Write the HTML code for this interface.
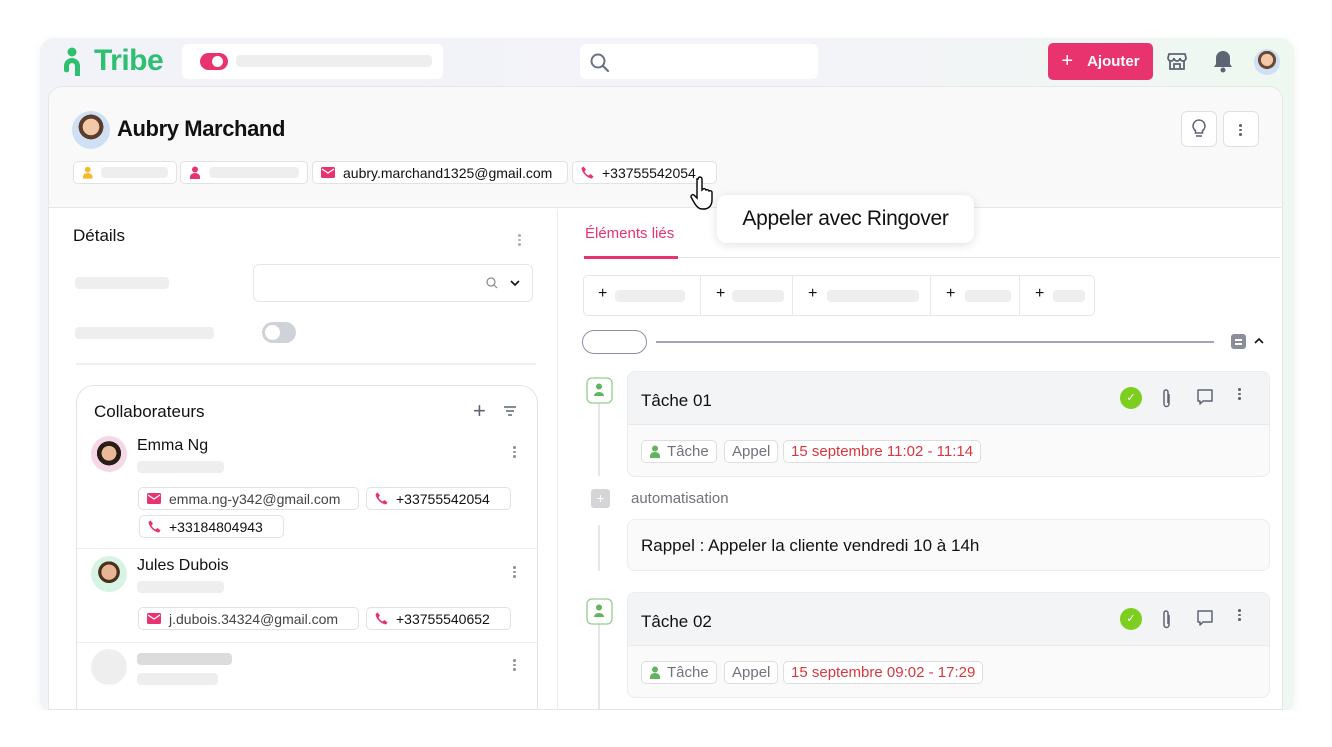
<!DOCTYPE html>
<html><head><meta charset="utf-8"><style>
*{box-sizing:border-box;margin:0;padding:0}
body{width:1332px;height:747px;background:#fff;font-family:"Liberation Sans",Arial,sans-serif;position:relative;overflow:hidden;color:#111}
.a{position:absolute}
.frame{left:40px;top:38px;width:1254px;height:675px;border-radius:14px;background:linear-gradient(90deg,#f2f2f9 0%,#f3f3f9 60%,#eef8f0 100%);box-shadow:0 2px 10px rgba(0,0,0,.06)}
.card{left:48px;top:86px;width:1235px;height:624px;border-radius:14px 14px 0 0;background:#fff;border:1px solid #e6e6e6;overflow:hidden}
.sk{background:#eeeeee;border-radius:4px}
.chip{border:1px solid #e2e2e2;border-radius:5px;background:#fff;height:23px;font-size:14px;display:flex;align-items:center;padding:0 8px;gap:8px;white-space:nowrap}
.dots{width:3px}
.dots i{display:block;width:2.5px;height:2.5px;border-radius:50%;background:#666;margin:2px 0}
.tag{border:1px solid #dedede;border-radius:5px;height:23px;font-size:15px;display:flex;align-items:center;padding:0 7px;gap:6px;color:#70737e;background:#fff;white-space:nowrap}
</style></head><body>
<div class="a frame"></div>
<svg class="a" style="left:60px;top:46px" width="26" height="32" viewBox="0 0 26 32"><circle cx="12" cy="6" r="4.5" fill="#2fbf71"/><path d="M4 30V20a8 8 0 0 1 16 0v10h-5V20a3 3 0 0 0-6 0v5a3 3 0 0 1-5 0" fill="#2fbf71"/></svg>
<div class="a" style="left:94px;top:44px;font-size:30px;font-weight:bold;color:#2fbf71;letter-spacing:-.5px">Tribe</div>
<div class="a" style="left:182px;top:44px;width:261px;height:35px;background:#fff;border-radius:6px"></div>
<div class="a" style="left:200px;top:53px;width:28px;height:17px;border-radius:9px;background:#e8336f"></div>
<div class="a" style="left:212px;top:56px;width:11px;height:11px;border-radius:50%;background:#fff"></div>
<div class="a sk" style="left:236px;top:55px;width:196px;height:12px"></div>
<div class="a" style="left:580px;top:44px;width:238px;height:35px;background:#fff;border-radius:6px"></div>
<svg class="a" style="left:589px;top:52px" width="22" height="22" viewBox="0 0 22 22"><circle cx="9" cy="9" r="6.5" fill="none" stroke="#6b7280" stroke-width="2"/><path d="M14 14l5 5" stroke="#6b7280" stroke-width="2.2" stroke-linecap="round"/></svg>
<div class="a" style="left:1048px;top:43px;width:105px;height:37px;background:#e8336f;border-radius:5px;color:#fff;font-weight:bold;font-size:15px;display:flex;align-items:center;justify-content:center;gap:14px"><span style="font-size:20px;font-weight:normal">+</span>Ajouter</div>
<svg class="a" style="left:1166px;top:50px" width="22" height="22" viewBox="0 0 22 22" fill="none" stroke="#5d6575" stroke-width="1.8"><path d="M3 4h16l1 4a3 3 0 0 1-6 0 3 3 0 0 1-6 0 3 3 0 0 1-6 0z"/><path d="M4 11v8h14v-8M8 19v-5h6v5"/></svg>
<svg class="a" style="left:1212px;top:49px" width="22" height="24" viewBox="0 0 22 24"><path d="M11 2a7 7 0 0 0-7 7v6l-2 3h18l-2-3V9a7 7 0 0 0-7-7z" fill="#5d6575"/><circle cx="11" cy="21" r="2.5" fill="#5d6575"/></svg>
<div class="a" style="left:1254px;top:49px;width:26px;height:26px;border-radius:50%;background:radial-gradient(circle at 50% 42%,#f1c8a8 0 30%,#6b4a35 31% 45%,#cfe0f5 46%)"></div>

<div class="a card"></div>
<div class="a" style="left:49px;top:87px;width:1233px;height:121px;background:#f9f9f9;border-bottom:1px solid #e8e8e8;border-radius:13px 13px 0 0"></div>
<div class="a" style="left:72px;top:111px;width:38px;height:38px;border-radius:50%;background:radial-gradient(circle at 50% 42%,#f1c8a8 0 28%,#5a3d2b 29% 42%,#cfe0f5 43%)"></div>
<div class="a" style="left:117px;top:116px;font-size:22px;font-weight:bold;letter-spacing:-.4px">Aubry Marchand</div>
<div class="a" style="left:1181px;top:111px;width:36px;height:36px;border:1px solid #e0e0e0;border-radius:6px;background:#fff"></div>
<svg class="a" style="left:1189px;top:118px" width="20" height="22" viewBox="0 0 20 22" fill="none" stroke="#5d6575" stroke-width="1.6"><path d="M10 2a6 6 0 0 0-3.5 10.8V15h7v-2.2A6 6 0 0 0 10 2z"/><path d="M7 18h6"/></svg>
<div class="a" style="left:1223px;top:111px;width:36px;height:36px;border:1px solid #e0e0e0;border-radius:6px;background:#fff"></div>
<div class="a dots" style="left:1239px;top:122px"><i></i><i></i><i></i></div>

<div class="a chip" style="left:73px;top:161px;width:104px"><svg width="12" height="13" viewBox="0 0 12 13"><circle cx="6" cy="3.5" r="3" fill="#f6b92b"/><path d="M1 13v-2a5 4 0 0 1 10 0v2z" fill="#f6b92b"/></svg><span class="sk" style="width:70px;height:11px"></span></div>
<div class="a chip" style="left:180px;top:161px;width:128px"><svg width="12" height="13" viewBox="0 0 12 13"><circle cx="6" cy="3.5" r="3" fill="#e8336f"/><path d="M1 13v-2a5 4 0 0 1 10 0v2z" fill="#e8336f"/></svg><span class="sk" style="width:90px;height:11px"></span></div>
<div class="a chip" style="left:312px;top:161px;width:256px"><svg width="14" height="11" viewBox="0 0 14 11"><rect width="14" height="11" rx="1.5" fill="#e8336f"/><path d="M1 2l6 4 6-4" stroke="#fff" stroke-width="1.3" fill="none"/></svg>aubry.marchand1325@gmail.com</div>
<div class="a chip" style="left:572px;top:161px;width:145px"><svg width="13" height="13" viewBox="0 0 13 13"><path d="M2.5 0.5l2.5 3-1.5 2a8 8 0 0 0 4 4l2-1.5 3 2.5-1.5 2C6 12 1 7 .5 2z" fill="#e8336f"/></svg>+33755542054</div>
<svg class="a" style="left:690px;top:176px" width="28" height="36" viewBox="0 0 28 36"><path d="M8 3a2 2 0 0 1 4 0v11l1-1a2 2 0 0 1 3 1 2 2 0 0 1 3 1 2 2 0 0 1 3 1v8c0 5-3 9-8 9h-2c-3 0-5-2-7-5l-4-7a2 2 0 0 1 3-2l3 3V3z" fill="#fff" stroke="#000" stroke-width="1.4"/></svg>
<div class="a" style="left:717px;top:195px;width:257px;height:48px;background:#fff;border-radius:10px;box-shadow:0 2px 10px rgba(0,0,0,.12);font-size:21px;display:flex;align-items:center;justify-content:center;letter-spacing:-.3px">Appeler avec Ringover</div>

<div class="a" style="left:557px;top:209px;width:1px;height:501px;background:#ececec"></div>
<div class="a" style="left:73px;top:226px;font-size:17px">Détails</div>
<div class="a dots" style="left:518px;top:232px;opacity:.5"><i></i><i></i><i></i></div>
<div class="a sk" style="left:75px;top:277px;width:94px;height:12px"></div>
<div class="a" style="left:253px;top:264px;width:280px;height:38px;border:1px solid #e6e6e6;border-radius:6px"></div>
<svg class="a" style="left:485px;top:276px" width="14" height="14" viewBox="0 0 14 14"><circle cx="6" cy="6" r="4" fill="none" stroke="#888" stroke-width="1.2"/><path d="M9 9l3 3" stroke="#888" stroke-width="1.2"/></svg>
<svg class="a" style="left:509px;top:278px" width="12" height="10" viewBox="0 0 12 10"><path d="M2 3l4 4 4-4" stroke="#111" stroke-width="1.6" fill="none"/></svg>
<div class="a sk" style="left:75px;top:327px;width:139px;height:12px"></div>
<div class="a" style="left:262px;top:322px;width:34px;height:21px;border-radius:11px;background:#cfd2d8"></div>
<div class="a" style="left:265px;top:325px;width:15px;height:15px;border-radius:50%;background:#fff"></div>
<div class="a" style="left:76px;top:363px;width:460px;height:2px;background:#f0f0f0"></div>

<div class="a" style="left:76px;top:385px;width:462px;height:340px;border:1px solid #e3e3e3;border-radius:18px"></div>
<div class="a" style="left:94px;top:402px;font-size:17px">Collaborateurs</div>
<div class="a" style="left:473px;top:398px;font-size:22px;color:#5d6575;font-weight:300">+</div>
<svg class="a" style="left:503px;top:405px" width="14" height="12" viewBox="0 0 14 12"><path d="M1 2h12M3 6h8M5 10h4" stroke="#5d6575" stroke-width="1.5"/></svg>

<div class="a" style="left:91px;top:436px;width:36px;height:36px;border-radius:50%;background:radial-gradient(circle at 50% 48%,#e9b99a 0 28%,#2a1d17 29% 46%,#f5d7e6 47%)"></div>
<div class="a" style="left:137px;top:437px;font-size:16px">Emma Ng</div>
<div class="a sk" style="left:137px;top:461px;width:87px;height:12px"></div>
<div class="a dots" style="left:513px;top:444px;opacity:.7"><i></i><i></i><i></i></div>
<div class="a chip" style="left:138px;top:487px;width:221px"><svg width="14" height="11" viewBox="0 0 14 11"><rect width="14" height="11" rx="1.5" fill="#e8336f"/><path d="M1 2l6 4 6-4" stroke="#fff" stroke-width="1.3" fill="none"/></svg><span style="color:#444">emma.ng-y342@gmail.com</span></div>
<div class="a chip" style="left:366px;top:487px;width:145px"><svg width="13" height="13" viewBox="0 0 13 13"><path d="M2.5 0.5l2.5 3-1.5 2a8 8 0 0 0 4 4l2-1.5 3 2.5-1.5 2C6 12 1 7 .5 2z" fill="#e8336f"/></svg>+33755542054</div>
<div class="a chip" style="left:139px;top:515px;width:145px"><svg width="13" height="13" viewBox="0 0 13 13"><path d="M2.5 0.5l2.5 3-1.5 2a8 8 0 0 0 4 4l2-1.5 3 2.5-1.5 2C6 12 1 7 .5 2z" fill="#e8336f"/></svg>+33184804943</div>
<div class="a" style="left:77px;top:548px;width:460px;height:1px;background:#eee"></div>

<div class="a" style="left:91px;top:556px;width:36px;height:36px;border-radius:50%;background:radial-gradient(circle at 50% 45%,#e7b593 0 28%,#4a3020 29% 40%,#d7f3e4 41%)"></div>
<div class="a" style="left:137px;top:557px;font-size:16px">Jules Dubois</div>
<div class="a sk" style="left:137px;top:581px;width:87px;height:12px"></div>
<div class="a dots" style="left:513px;top:564px;opacity:.7"><i></i><i></i><i></i></div>
<div class="a chip" style="left:138px;top:607px;width:221px"><svg width="14" height="11" viewBox="0 0 14 11"><rect width="14" height="11" rx="1.5" fill="#e8336f"/><path d="M1 2l6 4 6-4" stroke="#fff" stroke-width="1.3" fill="none"/></svg><span style="color:#444">j.dubois.34324@gmail.com</span></div>
<div class="a chip" style="left:366px;top:607px;width:145px"><svg width="13" height="13" viewBox="0 0 13 13"><path d="M2.5 0.5l2.5 3-1.5 2a8 8 0 0 0 4 4l2-1.5 3 2.5-1.5 2C6 12 1 7 .5 2z" fill="#e8336f"/></svg>+33755540652</div>
<div class="a" style="left:77px;top:642px;width:460px;height:1px;background:#eee"></div>
<div class="a" style="left:91px;top:649px;width:36px;height:36px;border-radius:50%;background:#eeeeee"></div>
<div class="a" style="left:137px;top:653px;width:95px;height:12px;border-radius:4px;background:#dcdcdc"></div>
<div class="a sk" style="left:137px;top:673px;width:81px;height:12px"></div>
<div class="a dots" style="left:513px;top:657px;opacity:.7"><i></i><i></i><i></i></div>

<div class="a" style="left:585px;top:225px;font-size:15px;color:#e8336f">Éléments liés</div>
<div class="a" style="left:584px;top:257px;width:696px;height:1px;background:#e8e8e8"></div>
<div class="a" style="left:584px;top:256px;width:94px;height:3px;background:#e8336f"></div>
<div class="a" style="left:583px;top:275px;width:512px;height:41px;border:1px solid #e6e6e6;border-radius:5px"></div>
<div class="a" style="left:700px;top:276px;width:1px;height:39px;background:#e8e8e8"></div>
<div class="a" style="left:792px;top:276px;width:1px;height:39px;background:#e8e8e8"></div>
<div class="a" style="left:930px;top:276px;width:1px;height:39px;background:#e8e8e8"></div>
<div class="a" style="left:1019px;top:276px;width:1px;height:39px;background:#e8e8e8"></div>
<div class="a" style="left:598px;top:285px;font-size:16px">+</div><div class="a sk" style="left:615px;top:290px;width:70px;height:12px"></div>
<div class="a" style="left:716px;top:285px;font-size:16px">+</div><div class="a sk" style="left:732px;top:290px;width:52px;height:12px"></div>
<div class="a" style="left:808px;top:285px;font-size:16px">+</div><div class="a sk" style="left:827px;top:290px;width:92px;height:12px"></div>
<div class="a" style="left:946px;top:285px;font-size:16px">+</div><div class="a sk" style="left:965px;top:290px;width:46px;height:12px"></div>
<div class="a" style="left:1035px;top:285px;font-size:16px">+</div><div class="a sk" style="left:1053px;top:290px;width:32px;height:12px"></div>

<div class="a" style="left:582px;top:330px;width:65px;height:24px;border:1.5px solid #8c90a6;border-radius:12px"></div>
<div class="a" style="left:656px;top:341px;width:558px;height:2px;background:#a3a6b8"></div>
<div class="a" style="left:1231px;top:334px;width:15px;height:15px;border-radius:3px;background:#8a8e99"></div>
<div class="a" style="left:1235px;top:339px;width:7px;height:1.5px;background:#fff"></div><div class="a" style="left:1235px;top:343px;width:7px;height:1.5px;background:#fff"></div>
<svg class="a" style="left:1253px;top:336px" width="12" height="10" viewBox="0 0 12 10"><path d="M2 7l4-4 4 4" stroke="#111" stroke-width="1.6" fill="none"/></svg>

<div class="a" style="left:598px;top:402px;width:2px;height:74px;background:#e6e6e6"></div>
<div class="a" style="left:598px;top:525px;width:2px;height:46px;background:#e6e6e6"></div>
<div class="a" style="left:598px;top:623px;width:2px;height:87px;background:#e6e6e6"></div>

<svg class="a" style="left:586px;top:377px" width="27" height="27" viewBox="0 0 27 27"><rect x="1" y="1" width="25" height="25" rx="5" fill="#fff" stroke="#8fd08a" stroke-width="1.3"/><circle cx="13" cy="9.5" r="3" fill="#62b45f"/><path d="M8 19a5 4 0 0 1 10 0z" fill="#62b45f"/></svg>
<div class="a" style="left:627px;top:371px;width:643px;height:106px;border:1px solid #ececec;border-radius:8px;background:#fafafa;overflow:hidden"><div style="height:53px;background:#f3f4f6;border-bottom:1px solid #eaeaea"></div></div>
<div class="a" style="left:641px;top:391px;font-size:17px">Tâche 01</div>
<div class="a" style="left:1120px;top:387px;width:22px;height:22px;border-radius:50%;background:#7ccf1e;color:#fff;font-size:11px;text-align:center;line-height:22px">✓</div>
<svg class="a" style="left:1161px;top:388px" width="12" height="22" viewBox="0 0 12 22"><path d="M8 6v10a2.5 2.5 0 0 1-5 0V4a2 2 0 0 1 4 0v11" stroke="#5d6575" stroke-width="1.5" fill="none"/></svg>
<svg class="a" style="left:1196px;top:388px" width="18" height="19" viewBox="0 0 18 19"><path d="M2 2h14v11H7l-3 3v-3H2z" stroke="#5d6575" stroke-width="1.5" fill="none" stroke-linejoin="round"/></svg>
<div class="a dots" style="left:1238px;top:386px"><i></i><i></i><i></i></div>
<div class="a tag" style="left:641px;top:440px"><svg width="12" height="13" viewBox="0 0 12 13"><circle cx="6" cy="3.5" r="3" fill="#62b45f"/><path d="M1 13v-2a5 4 0 0 1 10 0v2z" fill="#62b45f"/></svg>Tâche</div>
<div class="a tag" style="left:724px;top:440px">Appel</div>
<div class="a tag" style="left:783px;top:440px;color:#d9363e">15 septembre 11:02 - 11:14</div>

<div class="a" style="left:591px;top:489px;width:19px;height:19px;border-radius:3px;background:#d5d5d8;color:#fff;font-size:14px;text-align:center;line-height:19px">+</div>
<div class="a" style="left:631px;top:490px;font-size:15px;color:#70737e">automatisation</div>
<div class="a" style="left:627px;top:519px;width:643px;height:52px;border:1px solid #ececec;border-radius:8px;background:#fafafa"></div>
<div class="a" style="left:641px;top:536px;font-size:17px">Rappel : Appeler la cliente vendredi 10 à 14h</div>

<svg class="a" style="left:586px;top:598px" width="27" height="27" viewBox="0 0 27 27"><rect x="1" y="1" width="25" height="25" rx="5" fill="#fff" stroke="#8fd08a" stroke-width="1.3"/><circle cx="13" cy="9.5" r="3" fill="#62b45f"/><path d="M8 19a5 4 0 0 1 10 0z" fill="#62b45f"/></svg>
<div class="a" style="left:627px;top:592px;width:643px;height:106px;border:1px solid #ececec;border-radius:8px;background:#fafafa;overflow:hidden"><div style="height:53px;background:#f3f4f6;border-bottom:1px solid #eaeaea"></div></div>
<div class="a" style="left:641px;top:612px;font-size:17px">Tâche 02</div>
<div class="a" style="left:1120px;top:608px;width:22px;height:22px;border-radius:50%;background:#7ccf1e;color:#fff;font-size:11px;text-align:center;line-height:22px">✓</div>
<svg class="a" style="left:1161px;top:609px" width="12" height="22" viewBox="0 0 12 22"><path d="M8 6v10a2.5 2.5 0 0 1-5 0V4a2 2 0 0 1 4 0v11" stroke="#5d6575" stroke-width="1.5" fill="none"/></svg>
<svg class="a" style="left:1196px;top:609px" width="18" height="19" viewBox="0 0 18 19"><path d="M2 2h14v11H7l-3 3v-3H2z" stroke="#5d6575" stroke-width="1.5" fill="none" stroke-linejoin="round"/></svg>
<div class="a dots" style="left:1238px;top:607px"><i></i><i></i><i></i></div>
<div class="a tag" style="left:641px;top:661px"><svg width="12" height="13" viewBox="0 0 12 13"><circle cx="6" cy="3.5" r="3" fill="#62b45f"/><path d="M1 13v-2a5 4 0 0 1 10 0v2z" fill="#62b45f"/></svg>Tâche</div>
<div class="a tag" style="left:724px;top:661px">Appel</div>
<div class="a tag" style="left:783px;top:661px;color:#d9363e">15 septembre 09:02 - 17:29</div>
<div class="a" style="left:40px;top:710px;width:1254px;height:37px;background:#fff"></div>
</body></html>
